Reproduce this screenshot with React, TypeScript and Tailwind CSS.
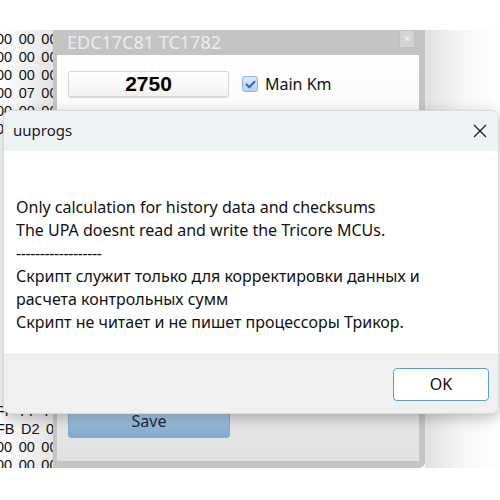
import React from 'react';

const hexTop = ['00 00 00', '00 00 00', '00 00 00', '00 07 00', '00 00 00', '00 00 00'];
const hexBottom = ['FF FF FF', 'FB D2 00', '00 00 00', '00 00 00'];

function HexColumn() {
  return (
    <div className="w-[53px] shrink-0 overflow-hidden bg-gradient-to-r from-white to-[#e4e4e4] flex flex-col justify-between font-['Liberation_Sans',sans-serif] text-[14.5px] [word-spacing:2.5px] leading-[18px] text-[#111] whitespace-nowrap">
      <div>
        {hexTop.map((r, i) => (
          <div key={i} className="-ml-[4px]">{r}</div>
        ))}
      </div>
      <div className="-mb-[6px]">
        {hexBottom.map((r, i) => (
          <div key={i} className="-ml-[4px]">{r}</div>
        ))}
      </div>
    </div>
  );
}

function AppWindow() {
  return (
    <div className="w-[372px] shrink-0 flex flex-col bg-[#c4c4c4] rounded-br-[6px] pr-[6px] pb-[7px] pl-[4px]">
      {/* title bar */}
      <div className="h-[25px] flex items-center justify-between">
        <span className="pl-[10px] text-[18px] text-[#ececec] font-['Noto_Sans',sans-serif]">EDC17C81 TC1782</span>
        <div className="w-[16px] h-[18px] -mt-[7px] mr-[4px] bg-[#d4d4d4] border border-[#c0c0c0] flex items-center justify-center text-[12px] text-[#eee] font-bold leading-none">×</div>
      </div>
      {/* body */}
      <div className="flex-1 bg-gradient-to-b from-white via-[#f0f0f0] to-[#e2e2e2] px-[11px] pt-[16px] pb-[23px] flex flex-col justify-between">
        <div className="flex items-center">
          <div className="w-[161px] h-[26px] border border-[#d8d8d8] rounded-[2px] bg-gradient-to-b from-white to-[#f2f2f2] shadow-[0_1px_1px_rgba(0,0,0,0.15)] flex items-center justify-center font-['Liberation_Sans',sans-serif] font-bold text-[21px] text-black">
            2750
          </div>
          <div className="ml-[13px] w-[16px] h-[16px] rounded-[3px] border border-[#8fb3d9] bg-gradient-to-b from-[#dbe9f7] to-[#b7d1ee] flex items-center justify-center">
            <svg width="11" height="9" viewBox="0 0 11 9">
              <path d="M1.5 4.5 L4.3 7.2 L9.5 1.8" fill="none" stroke="#2f6bb5" strokeWidth="2" strokeLinecap="round" strokeLinejoin="round" />
            </svg>
          </div>
          <span className="ml-[7px] text-[16px] text-[#111] font-['Noto_Sans',sans-serif]">Main Km</span>
        </div>
        <div className="w-[162px] h-[30px] rounded-[3px] border border-[#8aa9c6] bg-gradient-to-b from-[#b3cfe8] to-[#7ea8ce] flex items-end justify-center pb-[4px] text-[16px] text-[#1c2b3c] font-['Noto_Sans',sans-serif]">
          Save
        </div>
      </div>
    </div>
  );
}

function MessageBox() {
  return (
    <div className="absolute left-[3px] top-[110px] w-[496px] rounded-[8px] overflow-hidden bg-white shadow-[0_4px_14px_rgba(0,0,0,0.25)] border border-[#d9d9d9] font-['Noto_Sans',sans-serif]">
      <div className="h-[40px] bg-[#eef3f6] flex items-center justify-between pl-[9px] pr-[11px]">
        <span className="text-[15px] text-[#1a1a1a] -mt-[2px]">uuprogs</span>
        <svg width="14" height="14" viewBox="0 0 14 14">
          <path d="M1 1 L13 13 M13 1 L1 13" stroke="#222" strokeWidth="1.3" />
        </svg>
      </div>
      <div className="h-[203px] px-[12px] pt-[45px] text-[16px] leading-[23px] text-[#111]">
        <div>Only calculation for history data and checksums</div>
        <div>The UPA doesnt read and write the Tricore MCUs.</div>
        <div className="tracking-[-0.4px]">------------------</div>
        <div>Скрипт служит только для корректировки данных и</div>
        <div>расчета контрольных сумм</div>
        <div>Скрипт не читает и не пишет процессоры Трикор.</div>
      </div>
      <div className="h-[59px] bg-[#f0f0f0] border-t border-[#e6e6e6] flex items-center justify-end pr-[9px]">
        <div className="w-[96px] h-[33px] rounded-[4px] border border-[#5b9bd5] bg-white flex items-center justify-center text-[16px] text-[#111]">
          OK
        </div>
      </div>
    </div>
  );
}

export default function App() {
  return (
    <div className="relative w-[500px] h-[500px] bg-white overflow-hidden">
      <div className="h-[30px]" />
      <div className="flex h-[438px]">
        <HexColumn />
        <AppWindow />
        <div className="flex-1 bg-gradient-to-r from-[#e0e0e0] via-[#f6f6f6] to-white" />
      </div>
      <MessageBox />
    </div>
  );
}
